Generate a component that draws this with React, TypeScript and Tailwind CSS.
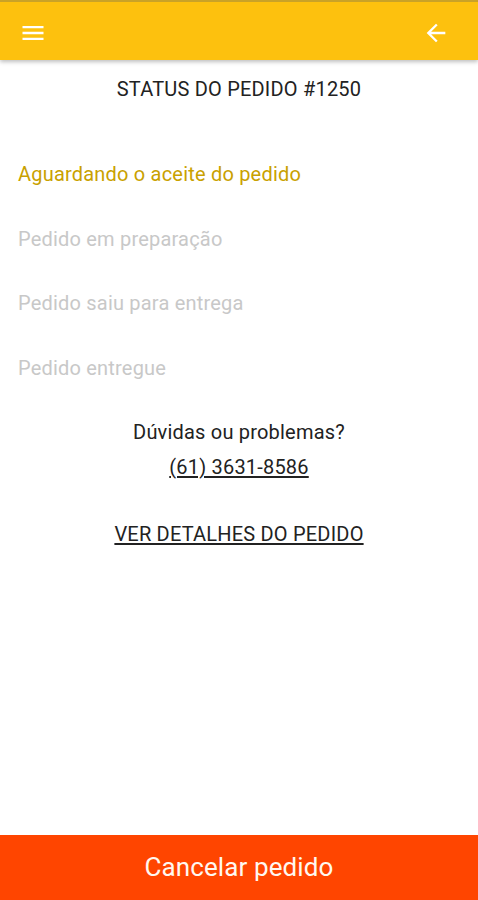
import React from "react";

const steps = [
  { label: "Aguardando o aceite do pedido", active: true },
  { label: "Pedido em preparação", active: false },
  { label: "Pedido saiu para entrega", active: false },
  { label: "Pedido entregue", active: false },
];

const MenuIcon = () => (
  <svg width="28" height="28" viewBox="0 0 24 24" fill="#ffffff">
    <path d="M3 18h18v-2H3v2zm0-5h18v-2H3v2zm0-7v2h18V6H3z" />
  </svg>
);

const BackIcon = () => (
  <svg width="28" height="28" viewBox="0 0 24 24" fill="#ffffff">
    <path d="M20 11H7.83l5.59-5.59L12 4l-8 8 8 8 1.41-1.41L7.83 13H20v-2z" />
  </svg>
);

const App = () => {
  return (
    <div
      className="flex flex-col h-[900px] w-full bg-white"
      style={{ fontFamily: "Roboto, 'Liberation Sans', sans-serif" }}
    >
      <header className="h-[60px] shrink-0 border-t-2 border-[#c9a227] bg-[#fdc10e] flex items-center justify-between pl-[19px] pr-[28px] pt-[4px] shadow-[0_2px_4px_rgba(0,0,0,0.25)] z-10">
        <MenuIcon />
        <BackIcon />
      </header>

      <div className="flex-1 flex flex-col tracking-[0.2px]">
        <h1 className="mt-[17px] text-center text-[20px] leading-6 text-[#222]">
          STATUS DO PEDIDO #1250
        </h1>

        <ul className="mt-[61px] flex flex-col gap-[40.6px] px-[18px]">
          {steps.map((s) => (
            <li
              key={s.label}
              className={`text-[20px] leading-6 ${
                s.active ? "text-[#c9a100]" : "text-[#c8c8c8]"
              }`}
            >
              {s.label}
            </li>
          ))}
        </ul>

        <div className="mt-[40px] flex flex-col items-center text-[20px] leading-6 text-[#222]">
          <p>Dúvidas ou problemas?</p>
          <a className="mt-[11px] underline underline-offset-2">(61) 3631-8586</a>
          <a className="mt-[43px] underline underline-offset-2">VER DETALHES DO PEDIDO</a>
        </div>
      </div>

      <button className="h-[65px] shrink-0 bg-[#ff4500] text-[#fff8f0] text-[26px] tracking-[0.1px] flex items-center justify-center">
        Cancelar pedido
      </button>
    </div>
  );
};

export default App;
